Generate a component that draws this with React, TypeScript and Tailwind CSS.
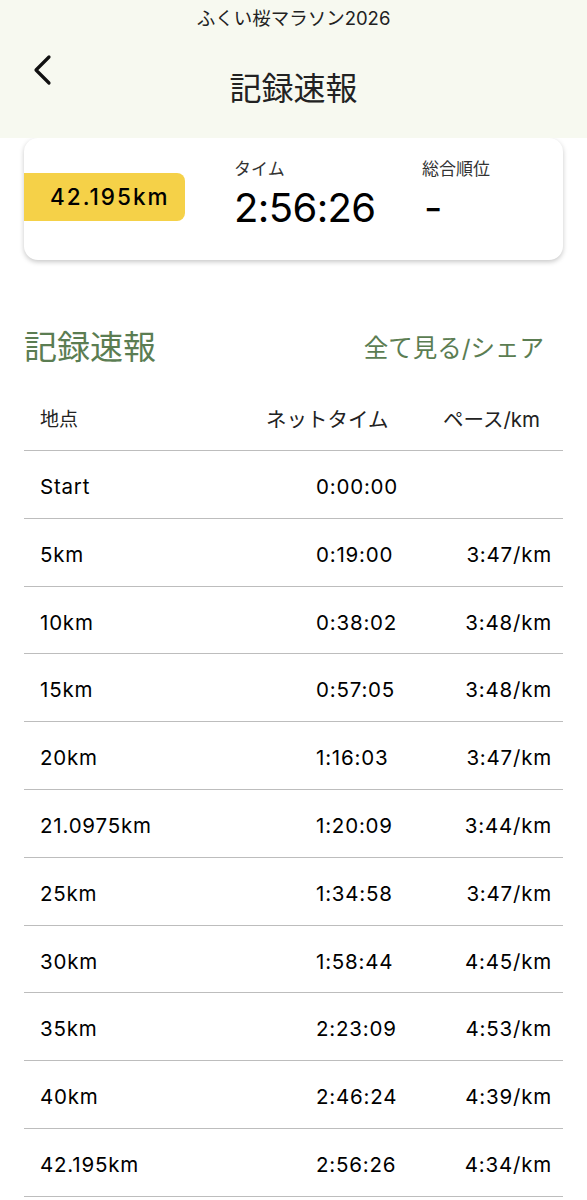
const rows = [
  { point: 'Start', time: '0:00:00', pace: '' },
  { point: '5km', time: '0:19:00', pace: '3:47/km' },
  { point: '10km', time: '0:38:02', pace: '3:48/km' },
  { point: '15km', time: '0:57:05', pace: '3:48/km' },
  { point: '20km', time: '1:16:03', pace: '3:47/km' },
  { point: '21.0975km', time: '1:20:09', pace: '3:44/km' },
  { point: '25km', time: '1:34:58', pace: '3:47/km' },
  { point: '30km', time: '1:58:44', pace: '4:45/km' },
  { point: '35km', time: '2:23:09', pace: '4:53/km' },
  { point: '40km', time: '2:46:24', pace: '4:39/km' },
  { point: '42.195km', time: '2:56:26', pace: '4:34/km' },
]

export default function App() {
  return (
    <div
      className="w-[587px] h-[1200px] overflow-hidden bg-white text-black"
      style={{ fontFamily: 'Inter, "Noto Sans CJK JP", sans-serif' }}
    >
      {/* Header */}
      <header className="h-[138px] bg-[#f7f9f0] flex flex-col items-center relative">
        <div className="pt-[5px] text-[18.5px] leading-[26px] text-[#222]">ふくい桜マラソン2026</div>
        <button className="absolute left-[30px] top-[52px] w-[24px] h-[36px] flex items-center justify-center" aria-label="戻る">
          <svg width="20" height="32" viewBox="0 0 20 32" fill="none">
            <path d="M17 3 L4 16 L17 29" stroke="#111" strokeWidth="3.2" strokeLinecap="round" strokeLinejoin="round" />
          </svg>
        </button>
        <h1 className="mt-[38px] text-[32px] leading-[40px] text-[#222] font-normal">記録速報</h1>
      </header>

      {/* Summary card */}
      <div className="mx-[24px] h-[122px] bg-white rounded-[14px] shadow-[0_2px_5px_rgba(0,0,0,0.22)] flex items-start overflow-hidden">
        <div className="mt-[35px] w-[161px] h-[48px] bg-[#f5d148] rounded-r-[8px] flex items-center pl-[26px] text-[22.5px] font-medium tracking-[2px]">
          42.195km
        </div>
        <div className="ml-[49px] mt-[20px] w-[188px]">
          <div className="text-[17px] leading-[22px] text-[#333]">タイム</div>
          <div className="text-[40px] leading-[48px] tracking-[-0.6px] mt-[4px]">2:56:26</div>
        </div>
        <div className="mt-[20px]">
          <div className="text-[17px] leading-[22px] text-[#333]">総合順位</div>
          <div className="text-[40px] leading-[48px] mt-[4px] pl-[2px]">-</div>
        </div>
      </div>

      {/* Section title */}
      <div className="mx-[24px] mt-[68px] flex items-center justify-between h-[40px]">
        <h2 className="text-[33px] font-normal text-[#5b7d52]">記録速報</h2>
        <span className="text-[24.5px] text-[#5b7d52] mr-[19px]">全て見る/シェア</span>
      </div>

      {/* Table */}
      <div className="mx-[24px] mt-[38px]">
        <div className="h-[45px] flex items-start text-[#222] border-b border-[#bdbdbd]">
          <div className="pl-[16px] w-[242px] leading-[28px] text-[19px]">地点</div>
          <div className="w-[177px] leading-[28px] text-[20.5px]">ネットタイム</div>
          <div className="leading-[28px] text-[20.5px]">ペース/km</div>
        </div>
        {rows.map((r) => (
          <div
            key={r.point}
            className="h-[67.8px] pt-[6px] flex items-center text-[20.5px] tracking-[0.8px] border-b border-[#bdbdbd]"
          >
            <div className="pl-[16px] w-[292px]">{r.point}</div>
            <div className="w-[110px]">{r.time}</div>
            <div className="flex-1 text-right pr-[11px]">{r.pace}</div>
          </div>
        ))}
      </div>
    </div>
  )
}
